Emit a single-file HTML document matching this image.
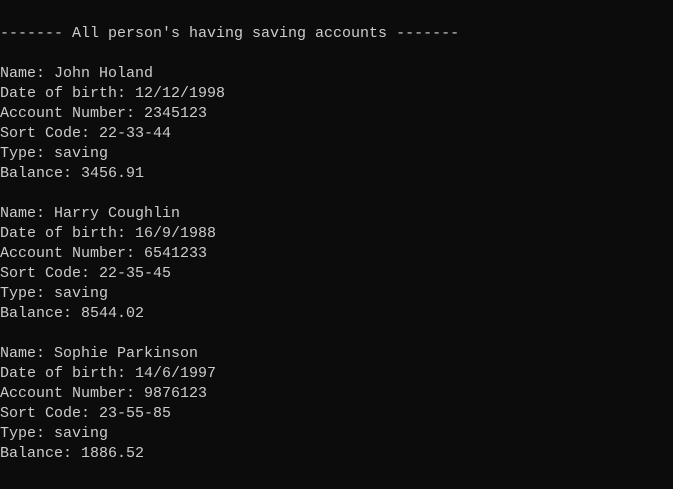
<!DOCTYPE html>
<html><head><meta charset="utf-8"><style>
html,body{margin:0;padding:0;background:#0c0c0c;width:673px;height:489px;overflow:hidden}
pre{margin:0;padding:24px 0 0 0;font-family:"Liberation Mono","DejaVu Sans Mono",monospace;font-size:15px;line-height:20px;color:#cccccc}
</style></head><body><pre>------- All person's having saving accounts -------

Name: John Holand
Date of birth: 12/12/1998
Account Number: 2345123
Sort Code: 22-33-44
Type: saving
Balance: 3456.91

Name: Harry Coughlin
Date of birth: 16/9/1988
Account Number: 6541233
Sort Code: 22-35-45
Type: saving
Balance: 8544.02

Name: Sophie Parkinson
Date of birth: 14/6/1997
Account Number: 9876123
Sort Code: 23-55-85
Type: saving
Balance: 1886.52
</pre></body></html>
